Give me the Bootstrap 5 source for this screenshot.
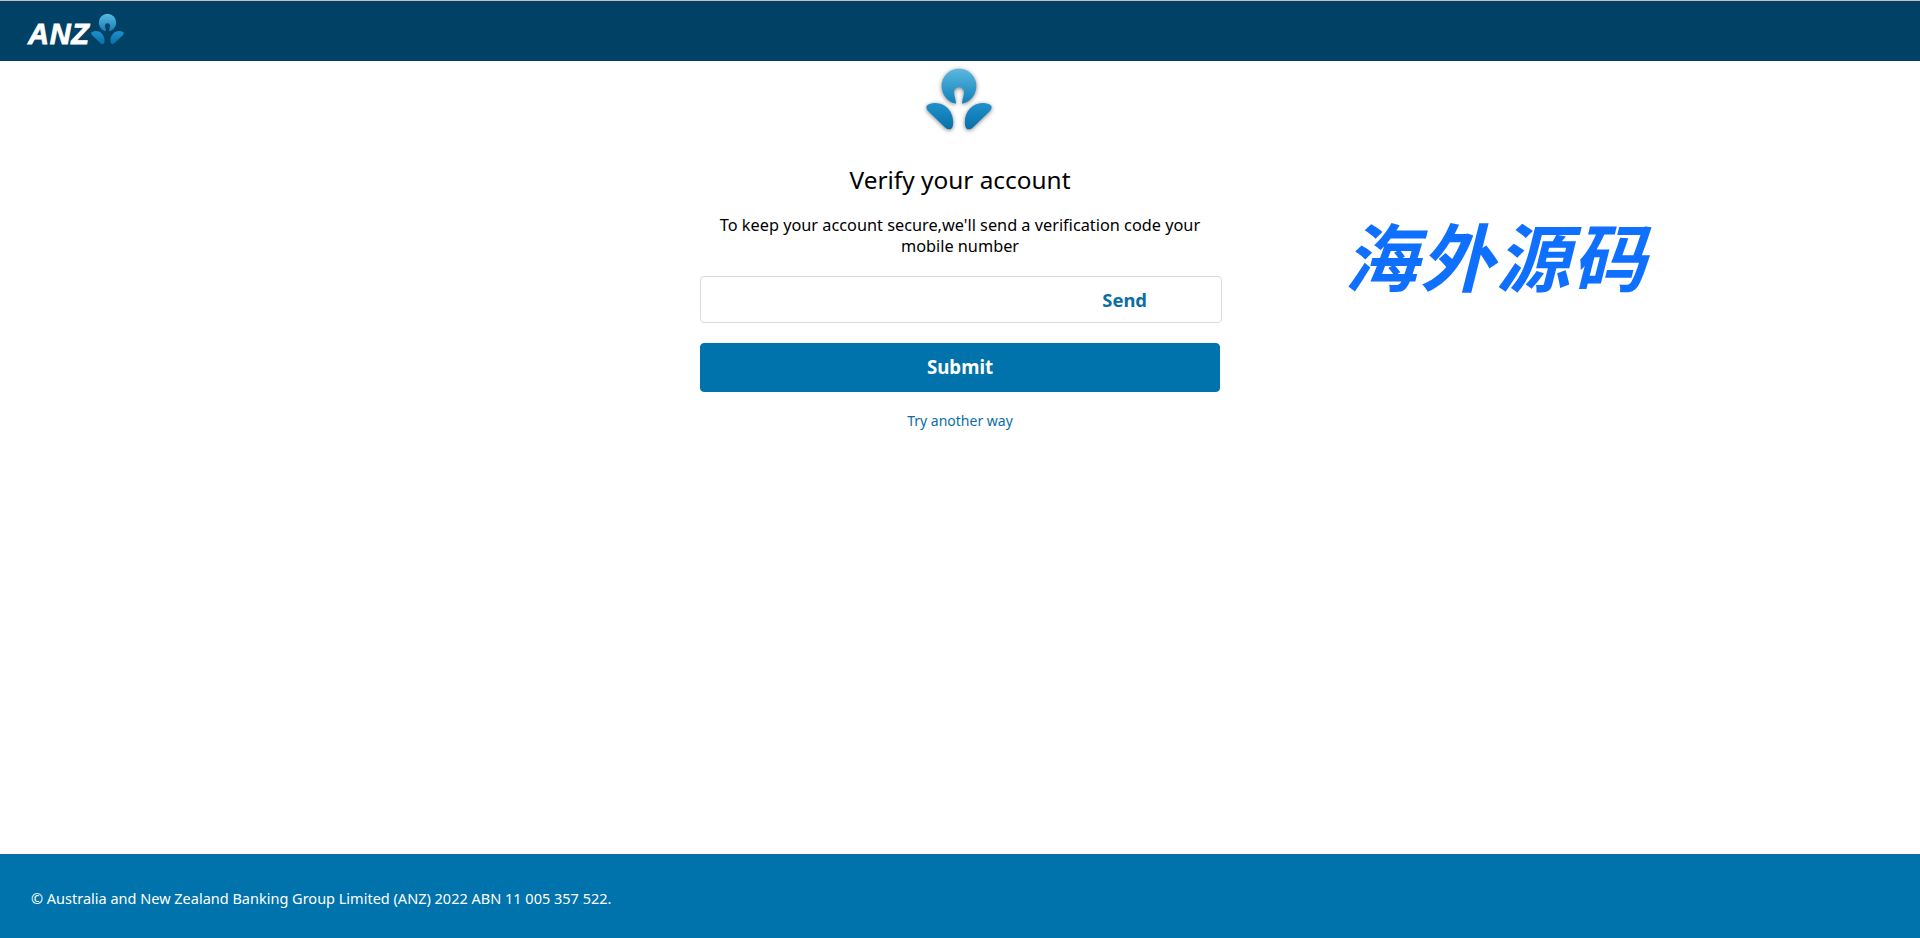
<!DOCTYPE html>
<html lang="en">
<head>
  <meta charset="UTF-8" />
  <title>Verify your account</title>
  <meta name="viewport" content="width=device-width, initial-scale=1.0" />
  <link href="https://cdn.jsdelivr.net/npm/bootstrap@5.3.2/dist/css/bootstrap.min.css" rel="stylesheet" />
  <style>
    body {
      font-family: "Noto Sans", sans-serif;
      color: #000;
      background: #fff;
    }
    .top-bar {
      height: 61px;
      background: #004165;
      border-top: 1px solid #c9bfb3;
      padding-left: 28px;
    }
    .anz-word {
      font-family: "Liberation Sans", sans-serif;
      font-weight: 700;
      font-style: italic;
      font-size: 29px;
      line-height: 1;
      color: #fff;
      letter-spacing: .7px;
      -webkit-text-stroke: .8px #fff;
      margin-top: 19px;
    }
    .anz-small {
      width: 35px;
      height: 32.5px;
      margin-top: 12px;
    }
    .anz-big {
      width: 70px;
      height: 65px;
      margin-top: 6px;
      margin-right: 3px;
      filter: drop-shadow(0 1px 2px rgba(0, 0, 0, .5));
    }
    .side-col { flex: 1 1 0; }
    .mid-col { width: 524px; }
    .verify-title {
      font-size: 24.4px;
      font-weight: 400;
      line-height: 32px;
      margin: 32px 0 0;
    }
    .verify-text {
      font-size: 16.3px;
      line-height: 21px;
      margin: 19px 0 0;
      padding: 0 16px;
    }
    .code-box {
      height: 47px;
      margin: 19px 0 0 2px;
      border: 1px solid #d9dbde;
      border-radius: 4px;
    }
    .send-link {
      color: #0a6ea5;
      font-weight: 700;
      font-size: 18.4px;
      text-decoration: none;
      margin-right: 74px;
    }
    .btn-submit {
      width: 520px;
      height: 49px;
      margin: 20px 0 0 2px;
      background: #0072ac;
      border-color: #0072ac;
      color: #fff;
      font-weight: 700;
      font-size: 18.7px;
      border-radius: 4px;
    }
    .other-link {
      color: #0a6ea5;
      font-size: 14px;
      line-height: 20px;
      text-decoration: none;
    }
    .water-mark {
      font-family: "Noto Sans CJK SC", sans-serif;
      font-weight: 700;
      font-style: italic;
      font-size: 74px;
      line-height: 1;
      letter-spacing: 2px;
      color: #0f6fff;
      white-space: nowrap;
      margin: 156px 0 0 122px;
    }
    .page-foot {
      height: 84px;
      background: #0072ac;
      color: #fff;
      font-size: 14.5px;
      padding: 5px 0 0 31px;
    }
  </style>
</head>
<body>
  <svg width="0" height="0" class="position-absolute">
    <defs>
      <linearGradient id="topGrad" x1="0" y1="0" x2="0" y2="1">
        <stop offset="0" stop-color="#5cb8e0" />
        <stop offset="1" stop-color="#0f80ba" />
      </linearGradient>
      <linearGradient id="leafGrad" x1="0" y1="0" x2="0" y2="1">
        <stop offset="0" stop-color="#1f90cc" />
        <stop offset="1" stop-color="#0870a8" />
      </linearGradient>
      <symbol id="anzMark" viewBox="130 35 210 195">
        <path fill="url(#topGrad)" d="M226 145 C198 139 183 116 183 92 A52 52 0 0 1 287 92 C287 116 272 139 244 145 C244 134 250 122 250 111 A15 15 0 0 0 220 111 C220 122 226 134 226 145 Z" />
        <path fill="url(#leafGrad)" d="M145 147 C185 132 222 165 217 208 C216 222 205 226 195 218 L143 168 C134 158 136 150 145 147 Z" />
        <path fill="url(#leafGrad)" d="M325 147 C285 132 248 165 253 208 C254 222 265 226 275 218 L327 168 C336 158 334 150 325 147 Z" />
      </symbol>
    </defs>
  </svg>

  <div class="d-flex flex-column min-vh-100">
    <header class="top-bar d-flex align-items-start flex-shrink-0">
      <span class="anz-word">ANZ</span>
      <svg class="anz-small"><use href="#anzMark" /></svg>
    </header>

    <main class="d-flex flex-grow-1">
      <div class="side-col"></div>
      <div class="mid-col text-center">
        <svg class="anz-big"><use href="#anzMark" /></svg>
        <h1 class="verify-title">Verify your account</h1>
        <p class="verify-text">To keep your account secure,we'll send a verification code your mobile number</p>
        <div class="code-box d-flex align-items-center justify-content-end">
          <a href="#" class="send-link">Send</a>
        </div>
        <div class="text-start">
          <button type="button" class="btn btn-submit d-block">Submit</button>
        </div>
        <div class="mt-3"><a href="#" class="other-link">Try another way</a></div>
      </div>
      <div class="side-col">
        <div class="water-mark">海外源码</div>
      </div>
    </main>

    <footer class="page-foot d-flex align-items-center flex-shrink-0">
      © Australia and New Zealand Banking Group Limited (ANZ) 2022 ABN 11 005 357 522.
    </footer>
  </div>

  <script src="https://cdn.jsdelivr.net/npm/bootstrap@5.3.2/dist/js/bootstrap.bundle.min.js"></script>
</body>
</html>
